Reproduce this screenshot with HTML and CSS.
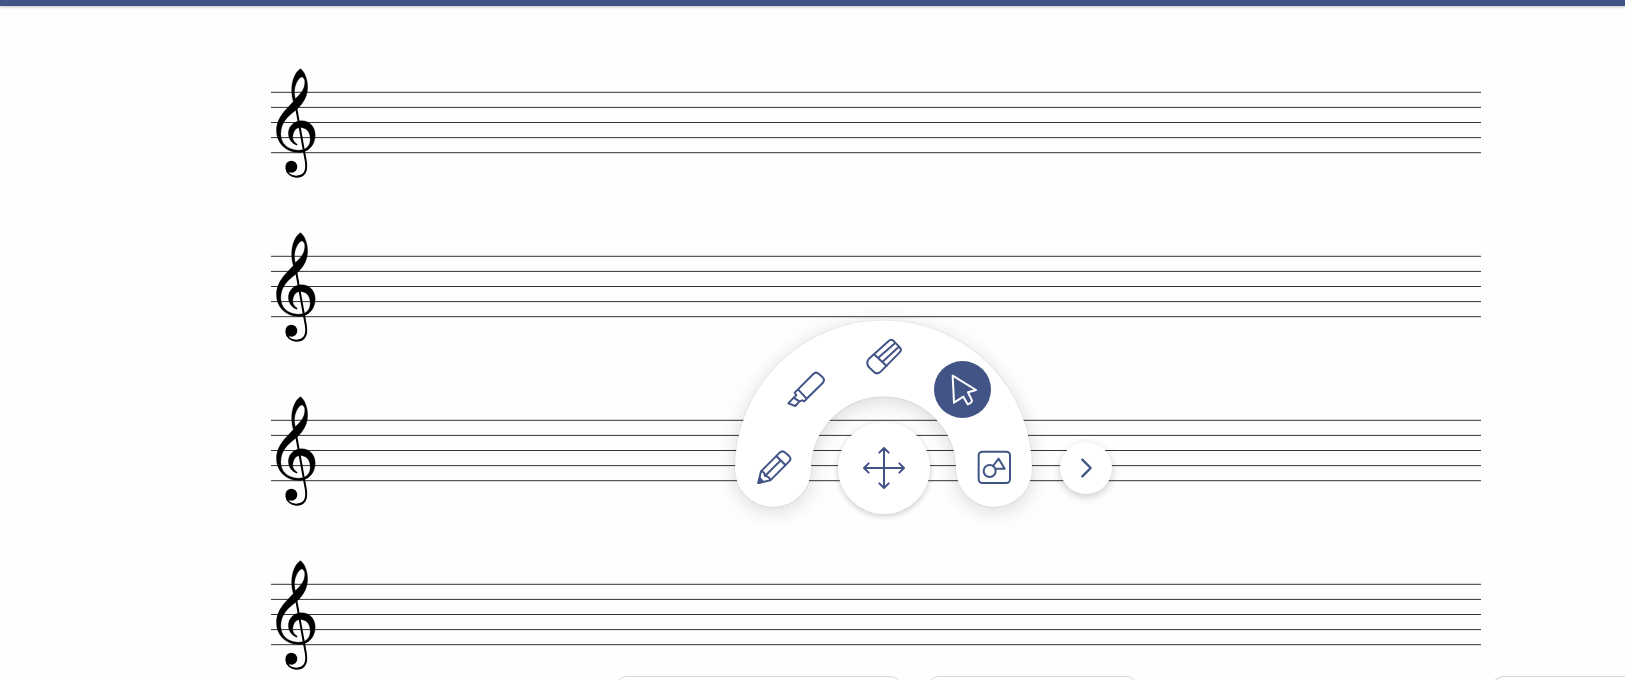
FILE: index.html
```
<!DOCTYPE html>
<html lang="en">
<head>
<meta charset="utf-8">
<title>Music sheet</title>
<link rel="stylesheet" href="styles.css">
</head>
<body>
<svg class="defs" aria-hidden="true">
  <symbol id="clef" viewBox="0 0 120 335" overflow="visible">
    <g transform="translate(-50 -23)">
      <path fill-rule="evenodd" stroke="#000" stroke-width="1" d="M123 25C108 35 97 60 97 88C97 105 99 115 102 124C85 144 51 170 51 212C51 250 80 278 118 278C148 278 168 255 168 225C168 200 150 182 127 182C103 182 87 200 87 220C87 240 100 252 112 256L114 253C102 246 98 235 101 225C104 208 115 201 128 203C145 205 153 220 153 238C153 258 140 272 115 271C85 270 64 250 64 222C64 185 90 165 112 148C135 127 145 105 145 80C145 55 135 32 123 25ZM130 51C138 56 138 68 134 82C130 95 118 106 108 116C103 95 106 80 112 67C117 57 124 48 130 51Z"/>
      <path d="M106 118L137 290C147 334 137 351 110 351C94 350 82 340 81 325" fill="none" stroke="#000" stroke-width="6"/>
      <circle cx="96" cy="321" r="18"/>
    </g>
  </symbol>
  <symbol id="stave" overflow="visible">
    <g class="rules">
      <line x2="100%" y1="32.3" y2="32.3"/>
      <line x2="100%" y1="47.4" y2="47.4"/>
      <line x2="100%" y1="62.5" y2="62.5"/>
      <line x2="100%" y1="77.6" y2="77.6"/>
      <line x2="100%" y1="92.7" y2="92.7"/>
    </g>
    <use href="#clef" x="5" y="8" width="40" height="111"/>
  </symbol>
</svg>

<header class="topbar"></header>
<main class="sheet">
  <svg class="stave" role="img" aria-label="Stave 1"><use href="#stave"/></svg>
  <svg class="stave" role="img" aria-label="Stave 2"><use href="#stave"/></svg>
  <svg class="stave" role="img" aria-label="Stave 3"><use href="#stave"/></svg>
  <svg class="stave" role="img" aria-label="Stave 4"><use href="#stave"/></svg>
</main>

<div class="palette" role="toolbar" aria-label="Drawing tools">
  <svg class="arch" viewBox="0 0 298 187" aria-hidden="true">
    <path d="M38 149A110.500 110.500 0 0 1 259 149"/>
  </svg>
  <button class="tool pencil" aria-label="Pencil"><svg viewBox="-60 -60 120 120">
    <path d="M-47 48L-39 13L17 -43Q25 -51 34 -43L46 -32Q53 -25 45 -16L-11 40ZM7 -33L34 -6M20 -20L-27 27M-39 13Q-28 14 -27 27Q-14 28 -11 40"/><path class="solid" d="M-47 48L-43 33L-33 44Z"/>
  </svg></button>
  <button class="tool marker" aria-label="Highlighter"><svg viewBox="-60 -60 120 120">
    <path d="M-24 1L22 -45Q30 -53 39 -45L50 -35Q58 -27 50 -18L2 29ZM-24 1L-34 11L-29 19L-37 26L-53 43L-32 51L-20 37L-11 34L-5 37L2 29M-37 26L-20 37"/>
  </svg></button>
  <button class="tool eraser" aria-label="Eraser"><svg viewBox="-60 -60 120 120">
    <path d="M-46 6L14 -48Q21 -55 28 -49L48 -28Q54 -21 47 -14L-9 43Q-20 54 -30 45L-45 31Q-55 18 -46 6ZM-30 -8L8 27M31 -40L-18 3M43 -29L-5 15"/>
  </svg></button>
  <button class="tool pointer" aria-label="Select" aria-pressed="true"><svg viewBox="-60 -60 120 120">
    <path d="M-28 -43L42 0L18 7L30 31Q30 39 17 43L4 20L-24 38Z"/>
  </svg></button>
  <button class="tool shapes" aria-label="Shapes"><svg viewBox="-60 -60 120 120">
    <rect x="-46" y="-46" width="94" height="94" rx="11"/><circle cx="-13" cy="12" r="18"/><path d="M-3 -3L14 -25L32 5H6"/>
  </svg></button>
  <button class="move" aria-label="Move palette"><svg viewBox="-75 -75 150 150">
    <path d="M-60 0H60M0 -60V60M-14 -46L0 -60L14 -46M-14 46L0 60L14 46M-46 -14L-60 0L-46 14M46 -14L60 0L46 14"/>
  </svg></button>
  <button class="next" aria-label="Next"><svg viewBox="-60 -60 120 120">
    <path d="M-11 -25L14 0L-11 25"/>
  </svg></button>
</div>

<footer class="dock">
  <div class="panel wide"></div>
  <div class="panel medium"></div>
  <div class="panel last"></div>
</footer>
</body>
</html>
```

FILE: styles.css
```
html {
  height: 100%;
  overflow: hidden;
}

body {
  margin: 0;
  height: 100%;
  overflow: hidden;
  position: relative;
  display: flex;
  flex-direction: column;
  background: #fefefe;
  font-family: "Open Sans", sans-serif;
}

.defs {
  position: absolute;
  width: 0;
  height: 0;
}

.topbar {
  flex: none;
  height: 6px;
  background: #425486;
  box-shadow: 0 1px 3px rgba(0, 0, 0, 0.25);
}

.sheet {
  flex: 1;
  min-height: 0;
  overflow: hidden;
  display: flex;
  flex-direction: column;
  box-sizing: border-box;
  padding: 54px 144px 0 271px;
}

.stave {
  display: block;
  width: 100%;
  height: 164px;
  flex: none;
  overflow: visible;
}

.rules line {
  stroke: #333;
  stroke-width: 1px;
}

/* Floating tool palette */
.palette {
  position: absolute;
  top: 320px;
  left: calc(50% - 77px);
  width: 378px;
  height: 194px;
}

.palette button {
  position: absolute;
  display: grid;
  place-items: center;
  padding: 0;
  border: 0;
  border-radius: 50%;
  background: #fff;
}

.palette button svg {
  width: 40px;
  height: 40px;
  fill: none;
  stroke: #425486;
  stroke-width: 6;
  stroke-linejoin: round;
  stroke-linecap: round;
}

.palette .solid {
  fill: #425486;
}

.arch {
  position: absolute;
  left: -1px;
  width: 298px;
  height: 187px;
  overflow: visible;
  filter: drop-shadow(0 0 1px rgba(0, 0, 0, 0.12)) drop-shadow(0 4px 10px rgba(0, 0, 0, 0.15));
}

.arch path {
  fill: none;
  stroke: #fff;
  stroke-width: 76;
  stroke-linecap: round;
}

.palette .tool {
  width: 57px;
  height: 57px;
}

.palette .pencil { left: 10px; top: 118px; }
.palette .marker { left: 42px; top: 40px; }
.palette .eraser { left: 120px; top: 8px; }
.palette .pointer { left: 198px; top: 41px; background: #425486; }
.palette .shapes { left: 230px; top: 118px; }

.palette .pointer svg {
  stroke: #fff;
}

.palette .move {
  left: 102px;
  top: 102px;
  width: 92px;
  height: 92px;
  box-shadow: 0 2px 6px rgba(0, 0, 0, 0.2);
}

.palette .move svg {
  width: 50px;
  height: 50px;
}

.palette .next {
  left: 324px;
  top: 122px;
  width: 52px;
  height: 52px;
  box-shadow: 0 3px 8px rgba(0, 0, 0, 0.2);
}

.palette .next svg {
  stroke-width: 7;
}

/* Panels docked along the bottom edge */
.dock {
  position: absolute;
  left: 615px;
  right: 0;
  bottom: 0;
  height: 4px;
  display: flex;
  gap: 25px;
  overflow: hidden;
}

.panel {
  box-sizing: border-box;
  height: 48px;
  border: 1px solid #d8d8d8;
  border-radius: 12px;
  background: #fff;
}

.wide { width: 287px; }
.medium { width: 211px; }
.last {
  width: 133px;
  margin-left: auto;
  border-right: 0;
  border-top-right-radius: 0;
}
```
